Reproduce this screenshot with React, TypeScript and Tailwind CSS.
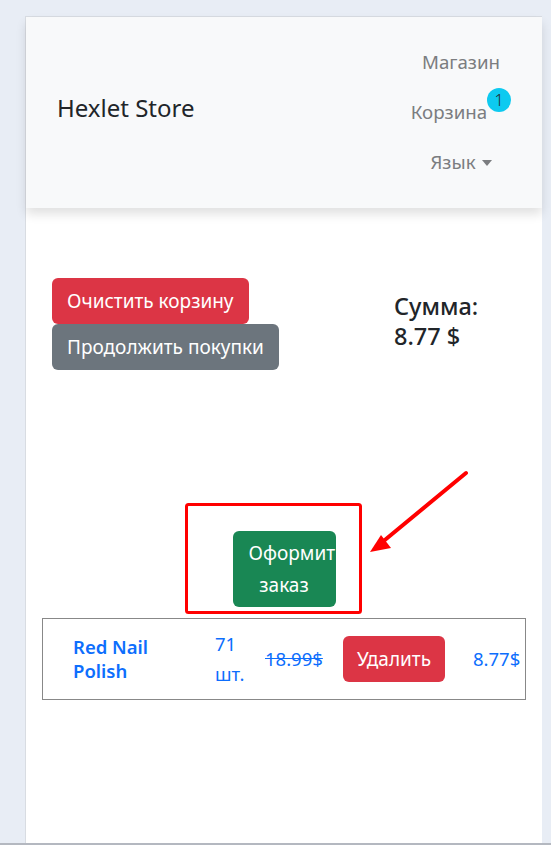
import React from 'react';

const font = { fontFamily: '"Noto Sans", "Open Sans", sans-serif' };

function Navbar() {
  return (
    <nav className="h-[191px] bg-[#f8f9fa] shadow-[0_6px_10px_rgba(0,0,0,0.12)] flex items-center justify-between pl-[31px] pr-[21px] relative z-10">
      <a className="text-[24px] text-[#212529] leading-none mb-[10px]">Hexlet Store</a>
      <ul className="flex flex-col items-center w-[120px] text-[18.7px] text-[#7b7d80]">
        <li className="h-[50px] flex items-center">Магазин</li>
        <li className="h-[50px] flex items-center">
          <span>Корзина</span>
          <span className="relative -top-[13px] w-[24px] h-[24px] rounded-full bg-[#0dcaf0] text-[#212529] text-[16px] font-light flex items-center justify-center leading-none">
            1
          </span>
        </li>
        <li className="h-[50px] flex items-center gap-[6px]">
          <span>Язык</span>
          <span className="w-0 h-0 border-l-[5px] border-r-[5px] border-t-[6px] border-l-transparent border-r-transparent border-t-[#7b7d80]" />
        </li>
      </ul>
    </nav>
  );
}

function CartRow() {
  return (
    <div className="mx-[16px] h-[82px] border border-[#888888] flex items-center text-[18.5px] text-[#0d6efd]">
      <div className="w-[172px] pl-[30px]">
        <a className="block w-[110px] font-semibold leading-[24px]">Red Nail Polish</a>
      </div>
      <div className="w-[50px] leading-[30px]">
        <div>71</div>
        <div>шт.</div>
      </div>
      <div className="w-[78px] line-through">18.99$</div>
      <div className="w-[130px]">
        <button className="h-[46px] px-[14px] rounded-[6px] bg-[#dc3545] text-white text-[19px]">Удалить</button>
      </div>
      <div>8.77$</div>
    </div>
  );
}

export default function App() {
  return (
    <div className="relative min-h-[845px] h-[845px] overflow-hidden bg-[#e8edf5] pl-[25px] pr-[9px] pt-[16px] flex" style={font}>
      <div className="flex-1 bg-white border-l border-t border-[#d8dce2] flex flex-col">
        <Navbar />
        <div className="pt-[70px]">
          <div className="flex pl-[26px]">
            <div className="flex flex-col items-start w-[342px]">
              <button className="h-[46px] px-[15px] rounded-[6px] bg-[#dc3545] text-white text-[19px]">Очистить корзину</button>
              <button className="h-[46px] px-[15px] rounded-[6px] bg-[#6c757d] text-white text-[19px]">Продолжить покупки</button>
            </div>
            <div className="mt-[13px] text-[23.5px] font-medium text-[#212529] leading-[30px]">
              <div>Сумма:</div>
              <div>8.77 $</div>
            </div>
          </div>
          <div className="flex justify-center mt-[161px]">
            <button className="w-[103px] h-[76px] px-[16px] rounded-[6px] bg-[#198754] text-white text-[19px] leading-[32px] text-center">
              Оформить заказ
            </button>
          </div>
          <div className="mt-[11px]">
            <CartRow />
          </div>
        </div>
      </div>
      <div className="absolute left-0 right-0 bottom-0 h-[2px] bg-[#b4b8c0]" />
      <svg className="absolute left-0 top-0 pointer-events-none" width="551" height="845" viewBox="0 0 551 845">
        <rect x="186.5" y="504.5" width="174" height="108" rx="2" fill="none" stroke="#ff0000" strokeWidth="3" />
        <line x1="466" y1="473" x2="380" y2="544" stroke="#ff0000" strokeWidth="4" strokeLinecap="round" />
        <polygon points="370,552 381,535 391,548" fill="#ff0000" />
      </svg>
    </div>
  );
}
